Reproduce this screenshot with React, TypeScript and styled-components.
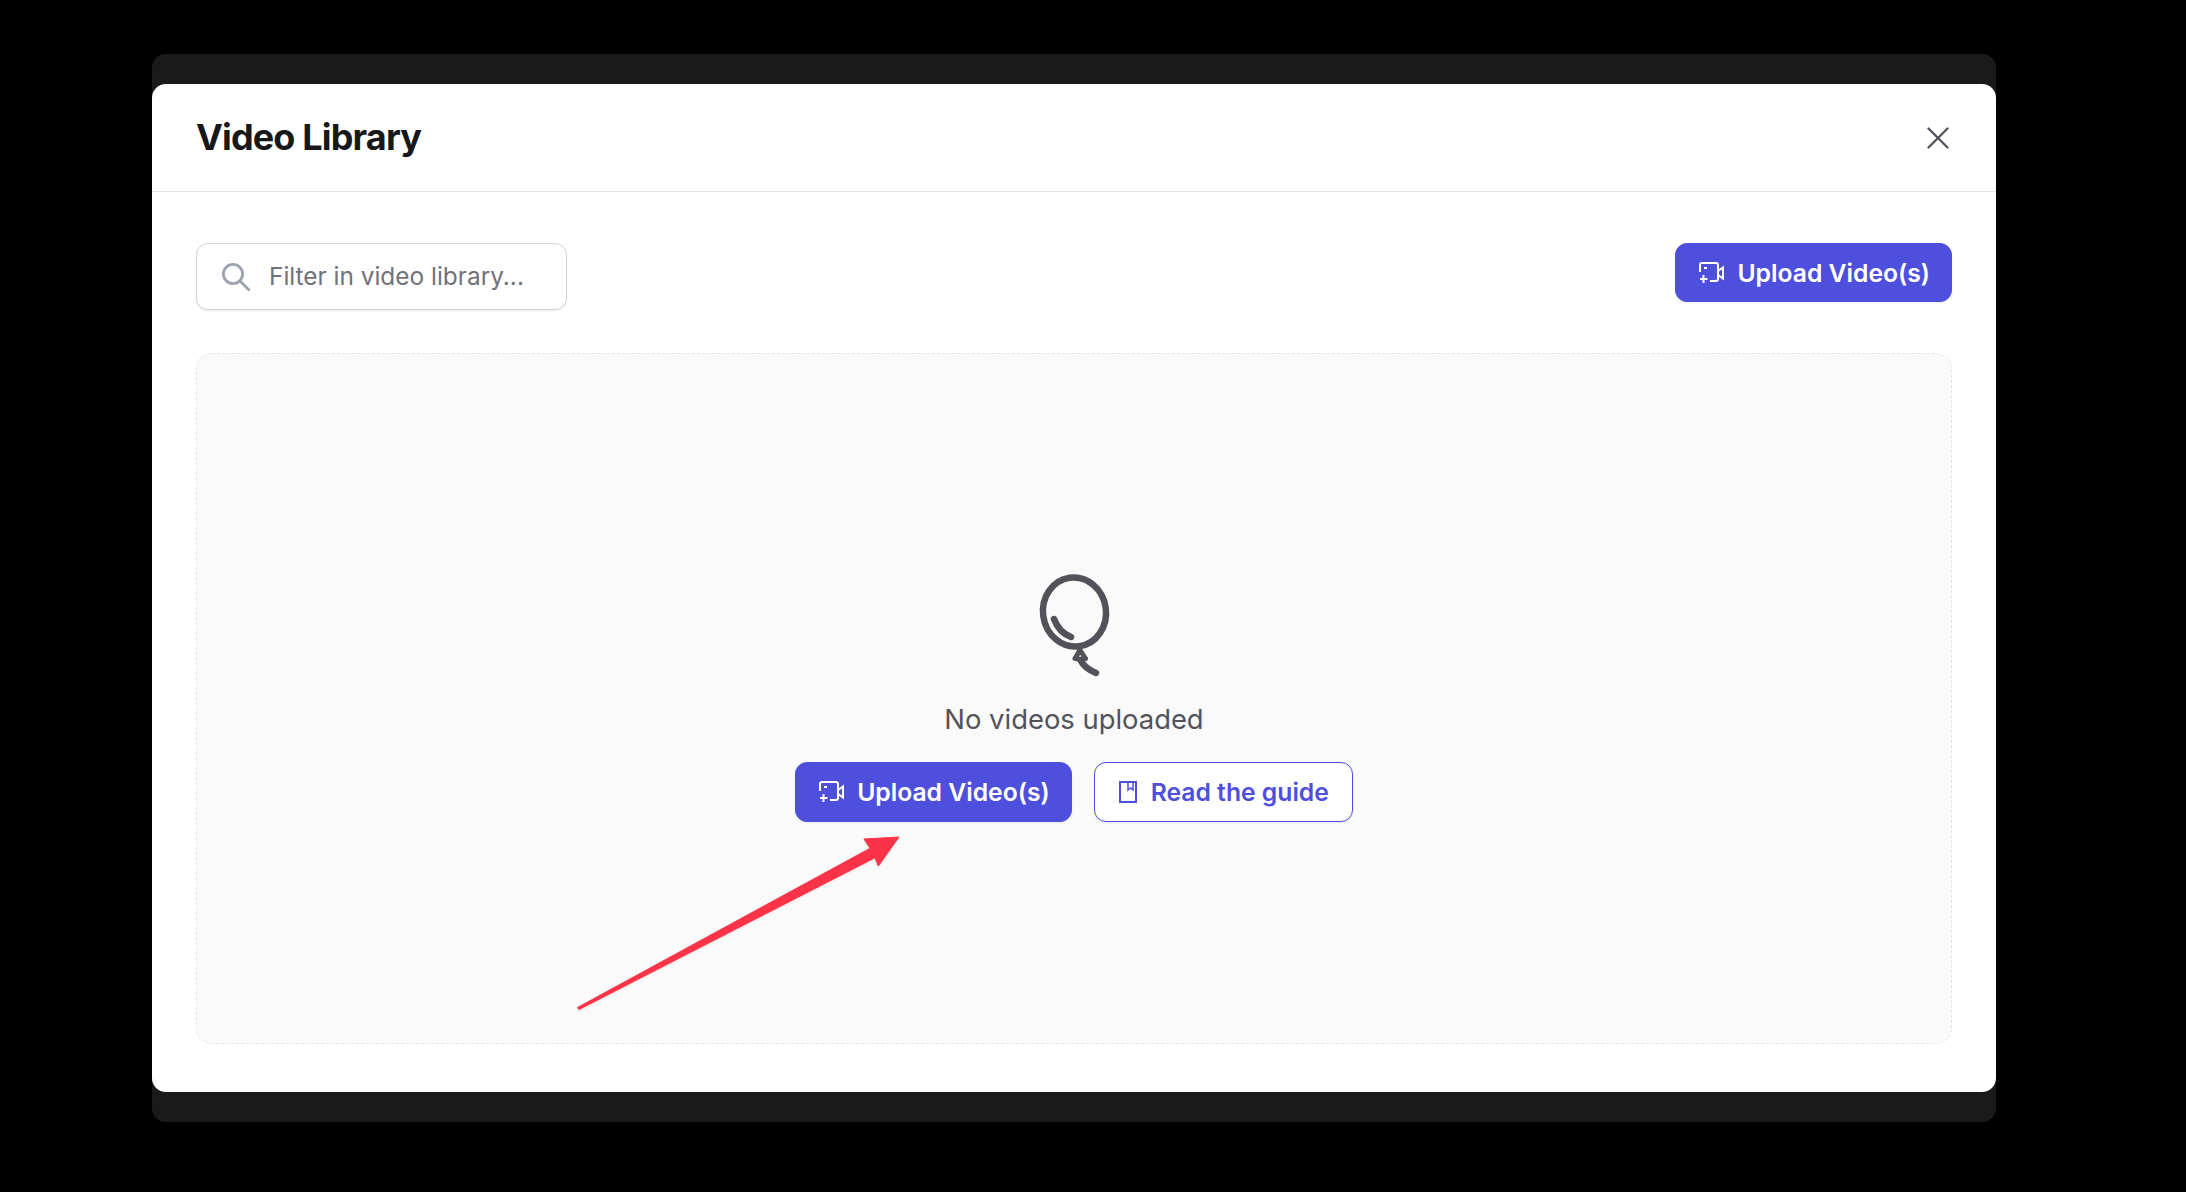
import React from 'react';
import styled, { createGlobalStyle } from 'styled-components';
import { X } from 'lucide-react';

const GlobalStyle = createGlobalStyle`
  html, body {
    margin: 0;
    height: 100%;
    background: #000;
    overflow: hidden;
  }
  * {
    box-sizing: border-box;
  }
`;

const VideoPlusIcon = () => (
  <svg width="26" height="22" viewBox="0 0 26 22" fill="none" stroke="currentColor" strokeWidth="2">
    <path d="M1 10V3a2 2 0 0 1 2-2h14a2 2 0 0 1 2 2v14a2 2 0 0 1-2 2h-6" />
    <path d="M5 6h3" />
    <path d="M4.5 13v8M1 17h7.5" />
    <path d="M19 9l5-3.5v11L19 13" />
  </svg>
);

const GuideIcon = () => (
  <svg width="18" height="22" viewBox="0 0 18 22" fill="none" stroke="currentColor" strokeWidth="2">
    <path d="M1 1h16v20H1z" />
    <path d="M9 1v8l2.5-2 2.5 2V1" strokeWidth="1.5" />
  </svg>
);

const SearchIcon = () => (
  <svg width="30" height="30" viewBox="0 0 30 30" fill="none" stroke="#9ca3af" strokeWidth="2.8">
    <circle cx="12" cy="12" r="9.6" />
    <path d="M19 19L28.5 28.5" />
  </svg>
);

const BalloonIcon = () => (
  <svg width="89" height="120" viewBox="0 0 89 120" fill="none" stroke="#52525b" strokeWidth="6.5" strokeLinecap="round" strokeLinejoin="round">
    <ellipse cx="44.5" cy="46" rx="31.5" ry="34.5" transform="rotate(-8 44.5 46)" />
    <path d="M24 53c3 8 9 15 17 18" />
    <path d="M50 84l-5 8.5c3 1 7 1 10.5 0z" strokeWidth="5" />
    <path d="M51 95c3 6 8 9 15 12" />
  </svg>
);

const Arrow = () => (
  <ArrowSvg width="340" height="190" viewBox="570 830 340 190">
    <path
      d="M899 836L878.3 865L875 856.7L579 1008.5L577.5 1006.5L870 847.3L864 838Z"
      fill="#fb3349"
      stroke="#fb3349"
      strokeWidth="1"
      strokeLinejoin="round"
    />
  </ArrowSvg>
);

export default function App() {
  return (
    <Page>
      <GlobalStyle />
      <Backdrop>
        <Modal>
          <Header>
            <Title>Video Library</Title>
            <CloseButton aria-label="Close">
              <X size={38} strokeWidth={1.5} />
            </CloseButton>
          </Header>
          <Body>
            <Toolbar>
              <SearchBox>
                <SearchIcon />
                <SearchInput placeholder="Filter in video library..." />
              </SearchBox>
              <Button $primary>
                <VideoPlusIcon />
                Upload Video(s)
              </Button>
            </Toolbar>
            <EmptyPanel>
              <BalloonIcon />
              <EmptyText>No videos uploaded</EmptyText>
              <Actions>
                <Button $primary>
                  <VideoPlusIcon />
                  Upload Video(s)
                </Button>
                <Button>
                  <GuideIcon />
                  Read the guide
                </Button>
              </Actions>
              <Arrow />
            </EmptyPanel>
          </Body>
        </Modal>
      </Backdrop>
    </Page>
  );
}

const Page = styled.div`
  height: 1192px;
  padding: 54px 190px 70px 152px;
  background: #000;
  font-family: Inter, "Liberation Sans", sans-serif;
`;

const Backdrop = styled.div`
  height: 100%;
  padding: 30px 0;
  background: #1a1a1a;
  border-radius: 14px;
`;

const Modal = styled.div`
  height: 100%;
  display: flex;
  flex-direction: column;
  background: #fff;
  border-radius: 14px;
  overflow: hidden;
`;

const Header = styled.header`
  height: 108px;
  flex: none;
  display: flex;
  align-items: center;
  justify-content: space-between;
  padding: 0 44px;
  border-bottom: 1px solid #e4e4e7;
`;

const Title = styled.h1`
  margin: 0 0 1px;
  font-size: 36px;
  font-weight: 700;
  letter-spacing: -0.85px;
  color: #18181b;
`;

const CloseButton = styled.button`
  display: flex;
  margin-right: -5px;
  padding: 0;
  border: 0;
  background: none;
  color: #52525b;
`;

const Body = styled.main`
  flex: 1;
  display: flex;
  flex-direction: column;
  gap: 43px;
  padding: 51px 44px 48px;
  min-height: 0;
`;

const Toolbar = styled.div`
  display: flex;
  align-items: flex-start;
  justify-content: space-between;
`;

const SearchBox = styled.label`
  width: 371px;
  height: 67px;
  display: flex;
  align-items: center;
  gap: 19px;
  padding: 0 24px;
  background: #fff;
  border: 1px solid #d4d4d8;
  border-radius: 12px;
  box-shadow: 0 1px 2px rgba(0, 0, 0, 0.08);
`;

const SearchInput = styled.input`
  flex: 1;
  min-width: 0;
  margin-left: -1px;
  padding: 0 0 2px;
  border: 0;
  outline: 0;
  background: none;
  font: 400 24.4px Inter, "Liberation Sans", sans-serif;
  color: #27272a;

  &::placeholder {
    color: #71717a;
    opacity: 1;
  }
`;

const Button = styled.button<{ $primary?: boolean }>`
  height: 59px;
  display: inline-flex;
  align-items: center;
  gap: ${props => props.$primary ? '12px' : '14px'};
  padding: ${props => props.$primary ? '0 21px 0 23px' : '0 23px 0 24px'};
  border-radius: 12px;
  border: 1px solid #4f4fde;
  background: ${props => props.$primary ? '#4f4fde' : '#fff'};
  color: ${props => props.$primary ? '#fff' : '#4f4fde'};
  font: 600 24.7px Inter, "Liberation Sans", sans-serif;
  box-shadow: 0 1px 2px rgba(0, 0, 0, 0.08);
`;

const EmptyPanel = styled.section`
  position: relative;
  flex: 1;
  min-height: 0;
  display: flex;
  flex-direction: column;
  align-items: center;
  padding-top: 212px;
  background: #fafafa;
  border: 1px dashed #e5e7eb;
  border-radius: 16px;
`;

const EmptyText = styled.p`
  margin: 15px 0 25px;
  font-size: 27.4px;
  line-height: 36px;
  color: #52525b;
`;

const Actions = styled.div`
  display: flex;
  gap: 22px;

  button {
    height: 60px;
  }
`;

const ArrowSvg = styled.svg`
  position: absolute;
  left: 373px;
  top: 477px;
  filter: drop-shadow(0 1px 1px rgba(0, 0, 0, 0.12));
`;
